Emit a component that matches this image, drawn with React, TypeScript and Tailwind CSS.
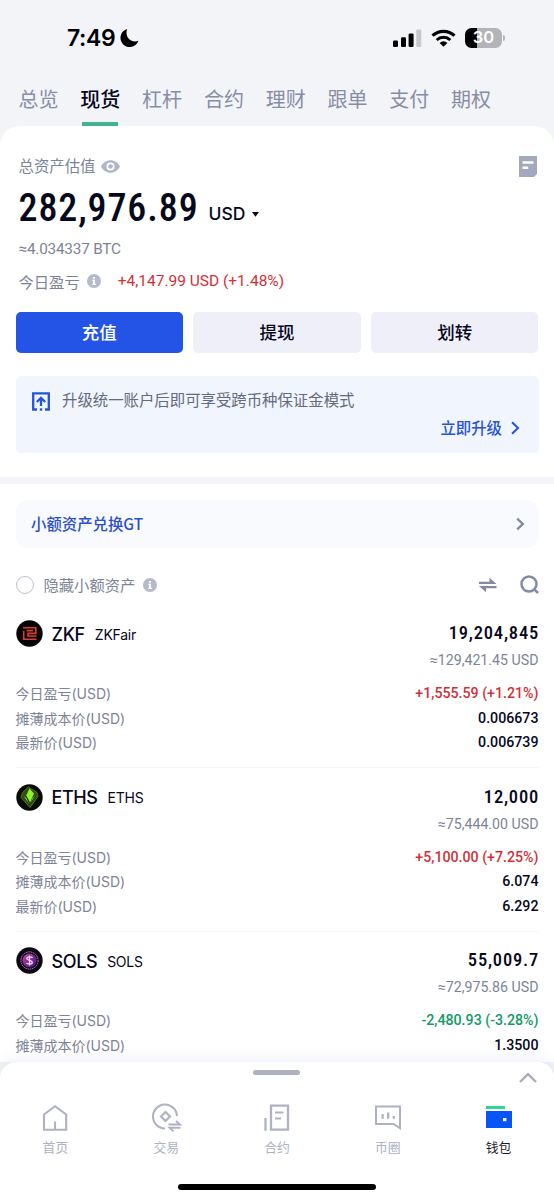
import { clsx } from "clsx";
import type { ReactNode } from "react";

type Coin = {
  symbol: string;
  name: string;
  amount: string;
  value: string;
  profit: string;
  cost: string;
  price?: string;
  up: boolean;
  icon: ReactNode;
};

const tabs = ["总览", "现货", "杠杆", "合约", "理财", "跟单", "支付", "期权"];

const ZkfIcon = () => (
  <svg width="27" height="27" viewBox="0 0 27 27" fill="none">
    <circle cx="13.5" cy="13.5" r="13.2" fill="#050303" />
    <path
      d="M7 7.7H19.8V13.4H12V16H20.5M7.7 10.8V19.2H20.5M10.5 10.6H17"
      stroke="#d94034"
      strokeWidth="1.6"
    />
  </svg>
);

const EthsIcon = () => (
  <svg width="27" height="27" viewBox="0 0 27 27" fill="none">
    <circle cx="13.5" cy="13.5" r="13.2" fill="#090b06" />
    <path d="M12.5 3 21 8.5 22 12.5 14 23.5 5 13.5 6.5 8.5Z" fill="#354a13" stroke="#5f7d27" strokeWidth=".8" />
    <path d="M13.5 4.5 18 9.5 14 18.5 10 12Z" fill="#8af52b" />
    <path d="M6.5 11.5 10.5 14 13.5 22Z" fill="#7ee02a" />
    <path d="M20.8 11 16.5 14 13.5 22Z" fill="#62c31f" />
    <path d="M7 12 13.5 21.5 20 11.5M10 12 13.5 18.5" stroke="#142206" strokeWidth=".9" />
  </svg>
);

const SolsIcon = () => (
  <svg width="27" height="27" viewBox="0 0 27 27" fill="none">
    <defs>
      <linearGradient id="sols" x1="7" y1="7" x2="20" y2="20" gradientUnits="userSpaceOnUse">
        <stop stopColor="#c13fa0" />
        <stop offset="1" stopColor="#3c1a86" />
      </linearGradient>
    </defs>
    <circle cx="13.5" cy="13.5" r="13.2" fill="#0e0814" />
    <circle cx="13.5" cy="13.5" r="8.6" stroke="#b184b8" strokeWidth="1" strokeDasharray="1.6 .7" />
    <circle cx="13.5" cy="13.5" r="7" fill="url(#sols)" />
    <path
      d="M16.5 10.8C15.8 9.8 11 9.3 10.8 11.6C10.7 13.7 16.3 13 16.3 15.4C16.2 17.6 11.5 17.5 10.5 16M13.5 8.5V18.5"
      stroke="#f8d9f2"
      strokeWidth="1.3"
    />
  </svg>
);

const coins: Coin[] = [
  {
    symbol: "ZKF",
    name: "ZKFair",
    amount: "19,204,845",
    value: "≈129,421.45 USD",
    profit: "+1,555.59 (+1.21%)",
    cost: "0.006673",
    price: "0.006739",
    up: true,
    icon: <ZkfIcon />,
  },
  {
    symbol: "ETHS",
    name: "ETHS",
    amount: "12,000",
    value: "≈75,444.00 USD",
    profit: "+5,100.00 (+7.25%)",
    cost: "6.074",
    price: "6.292",
    up: true,
    icon: <EthsIcon />,
  },
  {
    symbol: "SOLS",
    name: "SOLS",
    amount: "55,009.7",
    value: "≈72,975.86 USD",
    profit: "-2,480.93 (-3.28%)",
    cost: "1.3500",
    up: false,
    icon: <SolsIcon />,
  },
];

const InfoIcon = () => (
  <svg width="14" height="14" viewBox="0 0 14 14">
    <circle cx="7" cy="7" r="7" fill="#b4bacb" />
    <path d="M6 3h2v1.7H6zM5.2 5.8H8v4h1v1.2H5.2V9.8H6V7h-.8z" fill="#fff" />
  </svg>
);

function StatusBar() {
  return (
    <div className="flex h-[75px] items-center pl-[67px] pr-[49px]">
      <span className="mt-px font-['Inter','Liberation_Sans',sans-serif] text-[23px] font-semibold tracking-[-0.4px] text-black">
        7:49
      </span>
      <svg className="ml-[5px]" width="19" height="20" viewBox="0 0 19 20">
        <path d="M7.2 1A9.2 9.2 0 1 0 18.4 12.8C12 15.8 4 9.5 7.2 1Z" />
      </svg>
      <svg className="ml-auto" width="29" height="18" viewBox="0 0 29 18">
        <rect x="0" y="11.5" width="5" height="6.5" rx="1.3" />
        <rect x="8" y="8.3" width="5" height="9.7" rx="1.3" />
        <rect x="15.6" y="4.4" width="5" height="13.6" rx="1.3" />
        <rect x="23.3" y="0.5" width="5" height="17.5" rx="1.3" fill="#c6c7cb" />
      </svg>
      <svg className="ml-[9px]" width="25" height="18" viewBox="0 0 25 18" fill="none">
        <path d="M1.5 6.7A16 16 0 0 1 23.5 6.7" stroke="#000" strokeWidth="3.2" />
        <path d="M5.7 11A10 10 0 0 1 19.3 11" stroke="#000" strokeWidth="3" />
        <path d="M8.6 13.9A5.6 5.6 0 0 1 16.4 13.9L12.5 17.8Z" fill="#000" />
      </svg>
      <div className="ml-[9px] flex items-center">
        <div className="flex h-[20px] w-[37px] items-center justify-center rounded-[6.5px] bg-linear-to-r from-black from-32% to-[#b3b4b7] to-32% font-['Inter','Liberation_Sans',sans-serif] text-[16.5px] font-semibold text-white">
          30
        </div>
        <div className="ml-px h-[6px] w-[2px] rounded-r-full bg-[#b3b4b7]" />
      </div>
    </div>
  );
}

function Overview() {
  return (
    <section className="px-[15.5px] pt-[24px]">
      <div className="flex h-8 items-center pl-[3px] text-[15.4px] text-[#7d8497]">
        总资产估值
        <svg className="ml-[6px]" width="19" height="13" viewBox="0 0 19 13">
          <path d="M0 6.5C4-1.8 15-1.8 19 6.5C15 14.8 4 14.8 0 6.5Z" fill="#b0b6c8" />
          <circle cx="9.5" cy="6.5" r="3.2" fill="#b0b6c8" stroke="#fff" strokeWidth="1.7" />
        </svg>
        <svg className="ml-auto mr-[1.5px]" width="18" height="21" viewBox="0 0 18 21">
          <path d="M0 0H18V18L15 21H0Z" fill="#a3a8bf" />
          <path d="M3.5 5.2H14.5V7.8H3.5zM3.5 10.4H9.2V13H3.5z" fill="#fff" />
        </svg>
      </div>
      <div className="flex h-[52px] items-center pl-[3px] text-[#06081c]">
        <span className="w-[178px] whitespace-nowrap font-['Roboto',sans-serif] text-[38px] font-medium tracking-[0.9px] font-stretch-[75%]">
          282,976.89
        </span>
        <span className="ml-[12px] mt-[12px] font-['Inter',sans-serif] text-[17.5px] font-medium">USD</span>
        <svg className="ml-[7px] mt-[12px]" width="7" height="5" viewBox="0 0 7 5">
          <path d="M0 0H7L3.5 4.8Z" fill="#06081c" />
        </svg>
      </div>
      <div className="flex h-7 items-center pl-[3px] pt-[2px] font-['Roboto','Noto_Sans_CJK_SC',sans-serif] text-[15.3px] tracking-[-0.2px] text-[#7d8497]">
        ≈4.034337 BTC
      </div>
      <div className="mt-[5px] flex h-7 items-center pl-[3px] text-[15.3px] text-[#7d8497]">
        <span className="mr-[7px]">今日盈亏</span>
        <InfoIcon />
        <span className="ml-[17px] mt-[2px] font-['Roboto',sans-serif] text-[15.5px] text-[#d23137]">
          +4,147.99 USD (+1.48%)
        </span>
      </div>
      <div className="mt-[16.5px] grid h-[41px] grid-cols-3 gap-[10.5px] text-[17.5px] font-medium text-[#06081c]">
        <button className="rounded-[5px] bg-[#2354e6] text-white">充值</button>
        <button className="rounded-[5px] bg-[#eeeff9]">提现</button>
        <button className="rounded-[5px] bg-[#eeeff9]">划转</button>
      </div>
      <div className="mt-[23px] h-[77.5px] rounded-[5px] bg-[#f1f5fe] px-[16.5px] pt-[10px]">
        <div className="flex h-7 items-center text-[15.4px] text-[#636a7f]">
          <svg className="mr-[12px] mt-[4px]" width="18" height="19" viewBox="0 0 18 19" fill="none">
            <path d="M5 17.5H1.2V1.3H16.8V17.5H13" stroke="#2354d8" strokeWidth="2.3" />
            <path d="M9 14V7M4.8 10 9 5.8 13.2 10" stroke="#2354d8" strokeWidth="2.3" />
            <path d="M7.8 16.3h2.4v2.4H7.8z" fill="#2354d8" />
          </svg>
          升级统一账户后即可享受跨币种保证金模式
        </div>
        <div className="flex h-7 items-center justify-end text-[15.4px] font-medium text-[#2354d8]">
          立即升级
          <svg className="ml-[9px] mr-[2px]" width="9" height="14" viewBox="0 0 9 14" fill="none">
            <path d="M1 1.3 7 7 1 12.7" stroke="#2354d8" strokeWidth="2" />
          </svg>
        </div>
      </div>
    </section>
  );
}

function CoinRow({ coin }: { coin: Coin }) {
  const rows = [
    { label: "今日盈亏(USD)", value: coin.profit, color: coin.up ? "text-[#d23137]" : "text-[#139a68]" },
    { label: "摊薄成本价(USD)", value: coin.cost, color: "text-[#06081c]" },
    { label: "最新价(USD)", value: coin.price, color: "text-[#06081c]" },
  ].filter((row) => row.value);

  return (
    <div className="h-[163.5px] shrink-0 border-b border-[#f4f5f8] pt-[13px]">
      <div className="flex h-8 items-center text-[#06081c]">
        {coin.icon}
        <span className="ml-[9px] mt-px font-['Inter',sans-serif] text-[18px] font-medium tracking-[-0.4px]">
          {coin.symbol}
        </span>
        <span className="ml-[10px] mt-px font-['Inter',sans-serif] text-[14px] tracking-[-0.25px]">{coin.name}</span>
        <span className="-mr-[0.5px] ml-auto mt-px font-['Roboto',sans-serif] text-[18.5px] font-medium tracking-[0.8px] font-stretch-[75%]">
          {coin.amount}
        </span>
      </div>
      <div className="flex h-[22px] items-center justify-end pt-px font-['Roboto','Noto_Sans_CJK_SC',sans-serif] text-[14.2px] text-[#7d8497]">
        {coin.value}
      </div>
      <div className="mt-[9.75px] font-['Inter','Noto_Sans_CJK_SC',sans-serif]">
        {rows.map((row) => (
          <div key={row.label} className="flex h-[24.5px] items-center justify-between text-[14px] text-[#7d8497]">
            <span>{row.label}</span>
            <span className={clsx("mt-px font-['Roboto',sans-serif] text-[14.2px] font-medium", row.color)}>
              {row.value}
            </span>
          </div>
        ))}
      </div>
    </div>
  );
}

const navItems = [
  {
    label: "首页",
    icon: (
      <path d="M3 11.5 14 3.2 25.2 11.5V26.8H3ZM14 18.5V26.5" stroke="#aeb2c3" strokeWidth="2.1" />
    ),
  },
  {
    label: "交易",
    icon: (
      <>
        <path d="M25 13A12 12 0 1 0 13 25.5" stroke="#aeb2c3" strokeWidth="2.1" />
        <path d="M13.5 9 18 13.5 13.5 18 9 13.5Z" stroke="#aeb2c3" strokeWidth="2.2" />
        <path d="M16.5 21.5H28L24 18M28.5 24.8H17.5L21.5 28.3" stroke="#aeb2c3" strokeWidth="1.9" />
      </>
    ),
  },
  {
    label: "合约",
    icon: (
      <>
        <path d="M8 2.7H25V26.6H8ZM2.5 15V27.7" stroke="#aeb2c3" strokeWidth="2.3" />
        <path d="M12 9.5H20.5M12 15.5H18" stroke="#aeb2c3" strokeWidth="2.2" />
      </>
    ),
  },
  {
    label: "币圈",
    icon: (
      <>
        <path d="M2 3.4H26V25.2L19.5 21H2Z" stroke="#aeb2c3" strokeWidth="2" />
        <path d="M8.6 11V15.8M14.2 9.5V15.8M19.8 13V15.8" stroke="#aeb2c3" strokeWidth="2.3" />
      </>
    ),
  },
  {
    label: "钱包",
    icon: (
      <>
        <path d="M1 3H20V6H1z" fill="#2fd69b" />
        <path d="M1 8H27V25H1z" fill="#0754f7" />
        <path d="M18 15h3.4v3.2H18z" fill="#fff" />
      </>
    ),
  },
];

function BottomNav() {
  return (
    <nav className="relative z-10 flex h-[138px] shrink-0 flex-col rounded-t-[16px] bg-white shadow-[0_-3px_14px_rgba(90,110,170,0.10)]">
      <div className="grid h-[28px] grid-cols-3 pt-[8px]">
        <div className="col-start-2 h-[5px] w-[47px] justify-self-center rounded-full bg-[#adb1c2]" />
        <svg className="mr-[16px] mt-[2px] justify-self-end" width="20" height="12" viewBox="0 0 20 12" fill="none">
          <path d="M2 10 10 2.2 18 10" stroke="#a7abba" strokeWidth="2.4" />
        </svg>
      </div>
      <div className="grid grid-cols-5 pt-[13px]">
        {navItems.map((item, i) => (
          <div key={item.label} className="flex flex-col items-center">
            <svg width="28" height="28" viewBox="0 0 28 28" fill="none" overflow="visible">
              {item.icon}
            </svg>
            <span
              className={clsx(
                "mt-[6px] text-[12.8px] leading-5",
                i === 4 ? "text-[#1b1d2b]" : "text-[#aeb2c3]",
              )}
            >
              {item.label}
            </span>
          </div>
        ))}
      </div>
      <div className="mb-[10px] mt-auto h-[6.5px] w-[198px] self-center rounded-full bg-black" />
    </nav>
  );
}

export default function App() {
  return (
    <div className="flex h-[1200px] w-[554px] flex-col overflow-hidden bg-[#f3f4f8] font-['Noto_Sans_CJK_SC',sans-serif]">
      <StatusBar />
      <div className="flex h-[51px] gap-[21.8px] pl-[18.5px] text-[20px] text-[#888da6]">
        {tabs.map((tab) => (
          <div
            key={tab}
            className={clsx("flex flex-col items-center", tab === "现货" && "font-medium text-[#06081c]")}
          >
            <span className="h-[47px] leading-[47px]">{tab}</span>
            {tab === "现货" && <div className="h-1 w-9 bg-[#43b58b]" />}
          </div>
        ))}
      </div>
      <main className="flex min-h-0 flex-1 flex-col overflow-hidden rounded-t-[20px] bg-white">
        <Overview />
        <div className="mt-[23.5px] h-[7.5px] shrink-0 bg-[#f4f5f8]" />
        <div className="flex flex-col px-[15.5px] pt-[16px]">
          <div className="flex h-[48px] items-center justify-between rounded-[12px] bg-[#f9fafe] pl-[15.5px] pr-[14px] text-[15.4px] font-medium text-[#2b50cc]">
            小额资产兑换GT
            <svg width="9" height="14" viewBox="0 0 9 14" fill="none">
              <path d="M1.2 1.6 6.8 7 1.2 12.4" stroke="#848999" strokeWidth="2.3" />
            </svg>
          </div>
          <div className="mt-[20.5px] flex h-8 items-center text-[15.3px] text-[#7d8497]">
            <span className="mr-[10px] size-[18px] rounded-full border-[1.5px] border-[#bcc0d0]" />
            隐藏小额资产
            <span className="ml-[8px]">
              <InfoIcon />
            </span>
            <svg className="ml-auto" width="18" height="16" viewBox="0 0 18 16">
              <path d="M0 4.8H10.5V.8L17.5 6.9H0zM17.5 9.1H0L7 15.2V11.2H17.5z" fill="#858aa4" />
            </svg>
            <svg className="ml-[23px]" width="19" height="19" viewBox="0 0 19 19" fill="none">
              <circle cx="9" cy="9" r="7.5" stroke="#858aa4" strokeWidth="2.5" />
              <path d="M13.8 13.8 18 18" stroke="#858aa4" strokeWidth="2.5" />
            </svg>
          </div>
          <div className="mt-[4px] flex flex-col">
            {coins.map((coin) => (
              <CoinRow key={coin.symbol} coin={coin} />
            ))}
          </div>
        </div>
      </main>
      <BottomNav />
    </div>
  );
}
